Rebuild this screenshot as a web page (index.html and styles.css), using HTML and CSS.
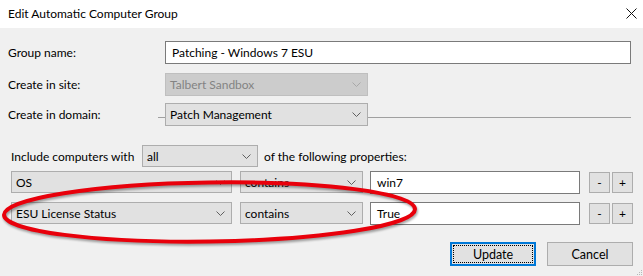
FILE: index.html
```html
<!DOCTYPE html>
<html lang="en">
    <head>
        <meta charset="UTF-8"/>
        <title>Edit Automatic Computer Group</title>
        <link rel="stylesheet" href="styles.css">
    </head>
    <body>
        <header class="titlebar">
          <span class="title">Edit Automatic Computer Group</span>
          <svg class="close" width="11" height="11" viewBox="0 0 11 11">
            <path d="M0.5 0.5L10.5 10.5M10.5 0.5L0.5 10.5" stroke="#111" stroke-width="1" fill="none"/>
          </svg>
        </header>
        <main class="dialog">
          <div class="row row-name">
            <label class="label">Group name:</label>
            <div class="edit edit-name">Patching - Windows 7 ESU</div>
          </div>
          <div class="row row-site">
            <label class="label">Create in site:</label>
            <div class="combo combo-site disabled">
              <span>Talbert Sandbox</span>
              <svg class="chevron" width="9" height="5" viewBox="0 0 9 5"><path d="M0.5 0.5L4.5 4.5L8.5 0.5" fill="none"/></svg>
            </div>
          </div>
          <div class="row row-domain">
            <label class="label label-domain">Create in domain:</label>
            <span class="rule rule-lead"></span>
            <div class="combo combo-site">
              <span>Patch Management</span>
              <svg class="chevron" width="9" height="5" viewBox="0 0 9 5"><path d="M0.5 0.5L4.5 4.5L8.5 0.5" fill="none"/></svg>
            </div>
            <span class="rule rule-tail"></span>
          </div>
          <div class="row row-include">
            <span class="include-text">Include computers with</span>
            <div class="combo combo-match">
              <span>all</span>
              <svg class="chevron" width="9" height="5" viewBox="0 0 9 5"><path d="M0.5 0.5L4.5 4.5L8.5 0.5" fill="none"/></svg>
            </div>
            <span class="include-tail">of the following properties:</span>
          </div>
          <div class="row row-prop">
            <div class="combo combo-prop">
              <span>OS</span>
              <svg class="chevron" width="9" height="5" viewBox="0 0 9 5"><path d="M0.5 0.5L4.5 4.5L8.5 0.5" fill="none"/></svg>
            </div>
            <div class="combo combo-op">
              <span>contains</span>
              <svg class="chevron" width="9" height="5" viewBox="0 0 9 5"><path d="M0.5 0.5L4.5 4.5L8.5 0.5" fill="none"/></svg>
            </div>
            <div class="edit edit-value">win7</div>
            <div class="mini-btn minus">-</div>
            <div class="mini-btn">+</div>
          </div>
          <div class="row row-prop row-prop-second">
            <div class="combo combo-prop">
              <span>ESU License Status</span>
              <svg class="chevron" width="9" height="5" viewBox="0 0 9 5"><path d="M0.5 0.5L4.5 4.5L8.5 0.5" fill="none"/></svg>
            </div>
            <div class="combo combo-op">
              <span>contains</span>
              <svg class="chevron" width="9" height="5" viewBox="0 0 9 5"><path d="M0.5 0.5L4.5 4.5L8.5 0.5" fill="none"/></svg>
            </div>
            <div class="edit edit-value">True</div>
            <div class="mini-btn minus">-</div>
            <div class="mini-btn">+</div>
          </div>
          <div class="row actions">
            <div class="btn btn-default"><span class="focus">Update</span></div>
            <div class="btn">Cancel</div>
          </div>
          <svg class="highlight" width="643" height="248" viewBox="0 28 643 248">
            <ellipse cx="209.5" cy="212" rx="205.5" ry="29.5" transform="rotate(-0.8 209.5 212)"/>
          </svg>
          <svg class="grip" width="7" height="7" viewBox="0 0 7 7">
            <rect x="5" y="1" width="1" height="1"/>
            <rect x="3" y="3" width="1" height="1"/>
            <rect x="5" y="3" width="1" height="1"/>
            <rect x="1" y="5" width="1" height="1"/>
            <rect x="3" y="5" width="1" height="1"/>
            <rect x="5" y="5" width="1" height="1"/>
          </svg>
        </main>
    </body>
</html>
```

FILE: styles.css
```css
body {
  margin: 0;
  width: 643px;
  height: 276px;
  overflow: hidden;
  background: #f0f0f0;
  color: #000;
  font-family: Lato, "Noto Sans", sans-serif;
  font-size: 12px;
}

.titlebar {
  height: 28px;
  background: #fff;
  display: flex;
  align-items: center;
  justify-content: space-between;
  padding: 0 6px 0 8px;
}
.title {
  margin-top: -1px;
}
.close {
  margin-top: -2px;
}

.dialog {
  position: relative;
  box-sizing: border-box;
  height: 248px;
  padding-top: 13px;
}

.row {
  display: flex;
  align-items: center;
  height: 23px;
}
.label {
  width: 157px;
  padding-left: 8px;
  flex: none;
}
.label-domain {
  width: 150px;
}

.row-site {
  margin-top: 9px;
}
.row-domain {
  margin-top: 7px;
}
.row-include {
  margin-top: 19px;
  height: 22px;
  padding-left: 11px;
}
.row-prop {
  margin-top: 4px;
  padding-left: 11px;
  align-items: flex-start;
}
.row-prop-second {
  margin-top: 8px;
}
.actions {
  margin-top: 17px;
  height: 24px;
  padding-left: 450px;
  gap: 11px;
}

.rule {
  align-self: flex-start;
  margin-top: 14px;
  height: 1px;
  background: #a0a0a0;
}
.rule-lead {
  width: 7px;
}
.rule-tail {
  flex: 1;
  margin-right: 12px;
}

.edit {
  box-sizing: border-box;
  height: 23px;
  background: #fff;
  border: 1px solid #7a7a7a;
  padding-left: 6px;
  display: flex;
  align-items: center;
}
.edit-name {
  width: 466px;
}
.edit-value {
  width: 210px;
  margin-left: 7px;
}

.combo {
  box-sizing: border-box;
  height: 23px;
  background: #e1e1e1;
  border: 1px solid #adadad;
  padding: 0 6px 0 4px;
  display: flex;
  align-items: center;
  justify-content: space-between;
}
.combo span {
  white-space: nowrap;
}
.chevron path {
  stroke: #606060;
  stroke-width: 1;
}
.combo.disabled {
  background: #cccccc;
  border-color: #bfbfbf;
  color: #838383;
}
.combo.disabled .chevron path {
  stroke: #a8a8a8;
}
.combo-site {
  width: 203px;
}
.combo-match {
  width: 116px;
  height: 22px;
}
.include-text {
  width: 131px;
  white-space: nowrap;
}
.include-tail {
  margin-left: 6px;
  white-space: nowrap;
}
.combo-prop {
  width: 221px;
  height: 22px;
}
.combo-op {
  width: 123px;
  height: 22px;
  margin-left: 8px;
}

.mini-btn {
  box-sizing: border-box;
  width: 21px;
  height: 21px;
  margin-top: 1px;
  margin-left: 2px;
  background: #e1e1e1;
  border: 1px solid #adadad;
  display: flex;
  align-items: center;
  justify-content: center;
}
.mini-btn.minus {
  margin-left: 9px;
}

.btn {
  box-sizing: border-box;
  width: 86px;
  height: 24px;
  background: #e1e1e1;
  border: 1px solid #adadad;
  display: flex;
  align-items: center;
  justify-content: center;
  font-size: 12.5px;
}
.btn-default {
  border: 2px solid #0078d7;
  padding: 1px;
}
.focus {
  box-sizing: border-box;
  width: 100%;
  height: 100%;
  border: 1px dotted #000;
  display: flex;
  align-items: center;
  justify-content: center;
}

.highlight {
  position: absolute;
  left: 0;
  top: 0;
  pointer-events: none;
  filter: drop-shadow(1px 2px 1px rgba(0, 0, 0, 0.35));
}
.highlight ellipse {
  fill: none;
  stroke: #e8000b;
  stroke-width: 4;
}

.grip {
  position: absolute;
  right: 0;
  bottom: 0;
  fill: #b8b8b8;
}
```
